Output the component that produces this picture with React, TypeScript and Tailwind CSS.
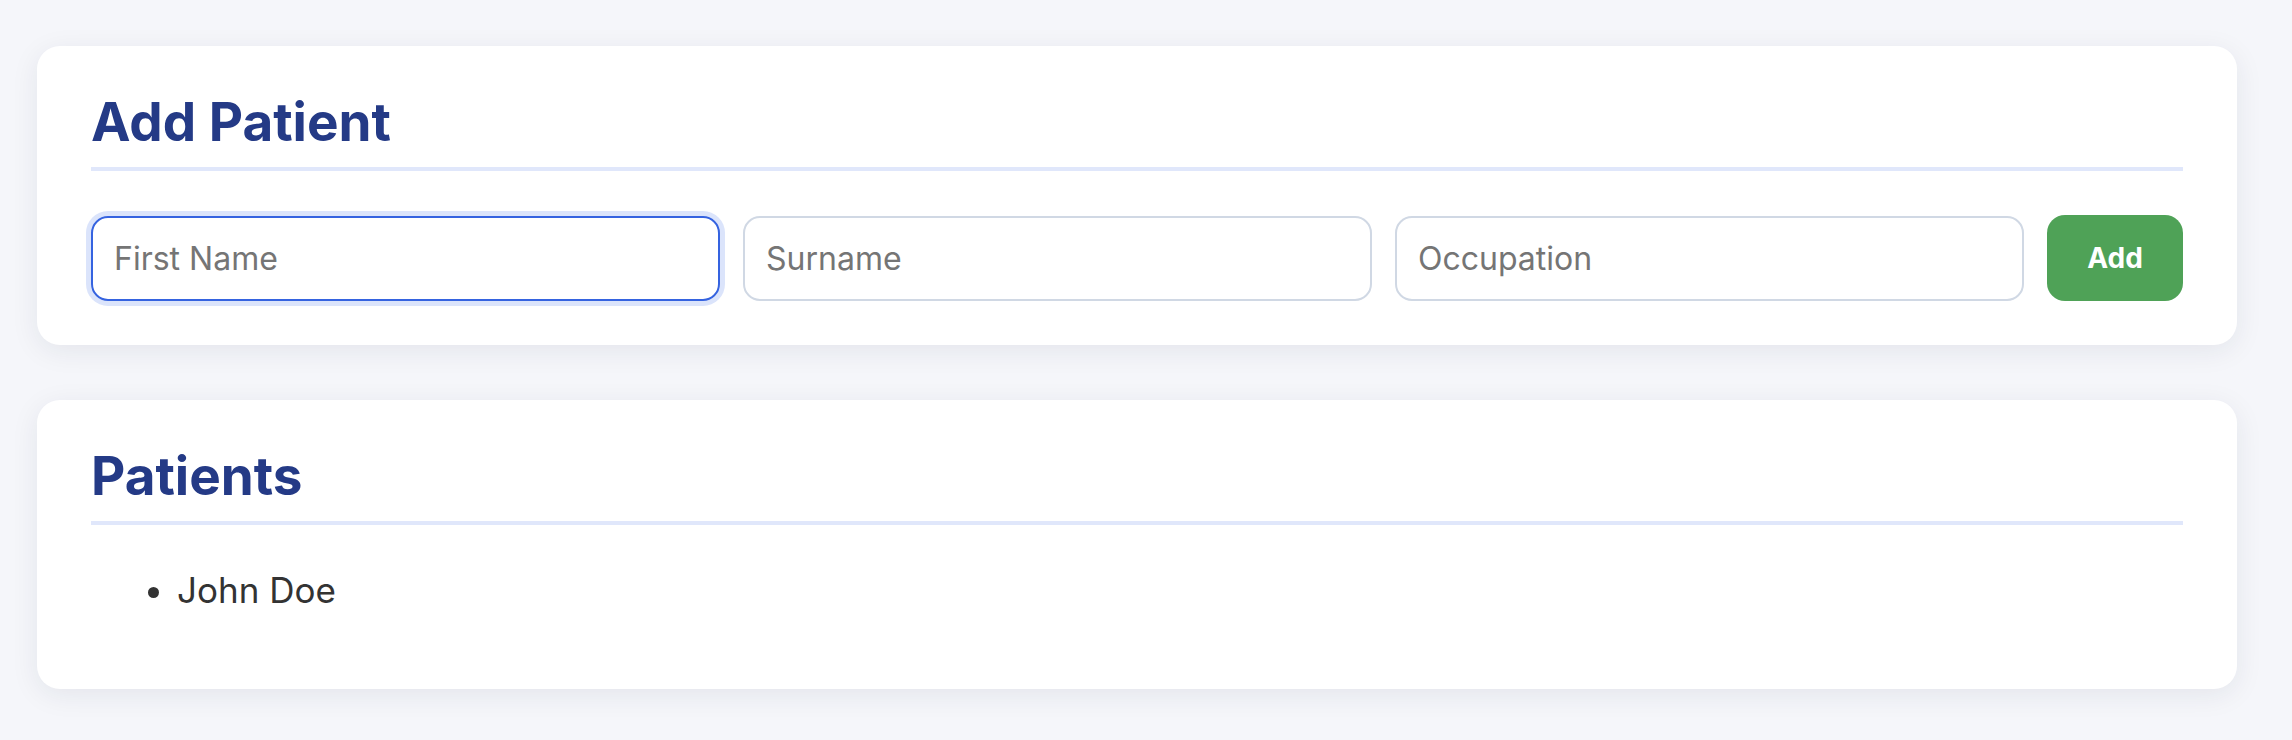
import { useState } from 'react';

interface Patient {
  firstName: string;
  surname: string;
  occupation: string;
}

export default function App() {
  const [patients, setPatients] = useState<Patient[]>([
    { firstName: 'John', surname: 'Doe', occupation: '' },
  ]);
  const [form, setForm] = useState<Patient>({ firstName: '', surname: '', occupation: '' });

  const handleAdd = () => {
    if (!form.firstName.trim() && !form.surname.trim()) return;
    setPatients([...patients, form]);
    setForm({ firstName: '', surname: '', occupation: '' });
  };

  return (
    <div className="h-screen overflow-hidden bg-[#f5f6fa] pt-[46px] pl-[37px] font-['Inter',sans-serif]">
      {/* Add Patient card */}
      <div className="w-[2200px] bg-white rounded-[23px] shadow-[0_6px_28px_rgba(30,41,59,0.08)] pt-[44px] pb-[44px] px-[54px]">
        <h2 className="text-[53px] leading-[65px] font-bold text-[#243a86] pb-[12px] border-b-4 border-[#e0e7fb]">
          Add Patient
        </h2>

        <div className="flex items-center gap-[23px] mt-[44px]">
          <input
            value={form.firstName}
            onChange={(e) => setForm({ ...form, firstName: e.target.value })}
            placeholder="First Name"
            className="flex-1 min-w-0 h-[85px] rounded-[17px] border-2 border-[#3563e0] shadow-[0_0_0_5px_#dbe4fb] px-[21px] text-[32px] text-[#333] placeholder:text-[#757575] outline-none"
          />
          <input
            value={form.surname}
            onChange={(e) => setForm({ ...form, surname: e.target.value })}
            placeholder="Surname"
            className="flex-1 min-w-0 h-[85px] rounded-[17px] border-2 border-[#d0d8e4] px-[21px] text-[32px] text-[#333] placeholder:text-[#757575] outline-none"
          />
          <input
            value={form.occupation}
            onChange={(e) => setForm({ ...form, occupation: e.target.value })}
            placeholder="Occupation"
            className="flex-1 min-w-0 h-[85px] rounded-[17px] border-2 border-[#d0d8e4] px-[21px] text-[32px] text-[#333] placeholder:text-[#757575] outline-none"
          />
          <button
            onClick={handleAdd}
            className="w-[136px] h-[86px] rounded-[18px] bg-[#4fa257] text-white text-[28px] font-bold"
          >
            Add
          </button>
        </div>
      </div>

      {/* Patients list card */}
      <div className="w-[2200px] mt-[55px] bg-white rounded-[23px] shadow-[0_6px_28px_rgba(30,41,59,0.08)] pt-[44px] pb-[44px] px-[54px]">
        <h2 className="text-[53px] leading-[65px] font-bold text-[#243a86] pb-[12px] border-b-4 border-[#e0e7fb]">
          Patients
        </h2>

        <ul className="list-disc pl-[86px] mt-[39px] mb-[29px] text-[35px] leading-[52px] text-[#333]">
          {patients.map((p, i) => (
            <li key={i}>
              {p.firstName} {p.surname}
            </li>
          ))}
        </ul>
      </div>
    </div>
  );
}
